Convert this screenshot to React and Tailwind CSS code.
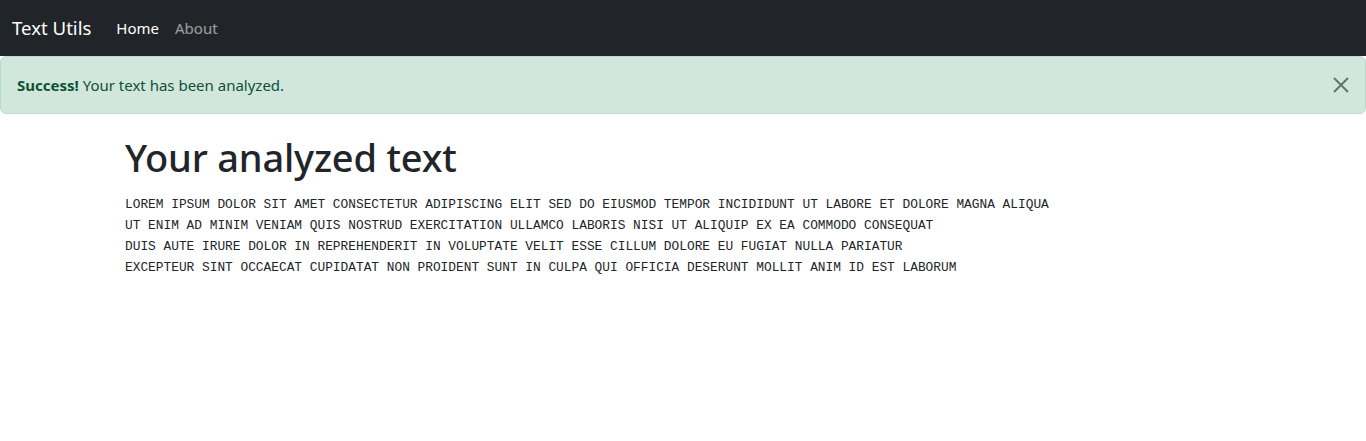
import React from "react";

const lines = [
  "LOREM IPSUM DOLOR SIT AMET CONSECTETUR ADIPISCING ELIT SED DO EIUSMOD TEMPOR INCIDIDUNT UT LABORE ET DOLORE MAGNA ALIQUA",
  "UT ENIM AD MINIM VENIAM QUIS NOSTRUD EXERCITATION ULLAMCO LABORIS NISI UT ALIQUIP EX EA COMMODO CONSEQUAT",
  "DUIS AUTE IRURE DOLOR IN REPREHENDERIT IN VOLUPTATE VELIT ESSE CILLUM DOLORE EU FUGIAT NULLA PARIATUR",
  "EXCEPTEUR SINT OCCAECAT CUPIDATAT NON PROIDENT SUNT IN CULPA QUI OFFICIA DESERUNT MOLLIT ANIM ID EST LABORUM",
];

export default function App() {
  return (
    <div className="min-h-[441px] bg-white font-['Noto_Sans',sans-serif] text-[#212529]">
      {/* navbar */}
      <nav className="flex h-14 items-center bg-[#212529] px-3">
        <span className="mr-[25px] text-[18.6px] text-white">Text Utils</span>
        <a className="text-[15px] text-white">Home</a>
        <a className="ml-4 text-[15px] text-white/55">About</a>
      </nav>

      {/* alert */}
      <div className="relative flex h-[58px] items-center rounded-md border border-[#badbcc] bg-[#d1e7dd] px-4 text-[15px] text-[#0f5132]">
        <span className="pt-px">
          <strong className="font-bold">Success!</strong> Your text has been analyzed.
        </span>
        <button className="absolute right-4 top-1/2 -translate-y-1/2 opacity-50">
          <svg width="16" height="16" viewBox="0 0 16 16">
            <path d="M1 1 L15 15 M15 1 L1 15" stroke="#000" strokeWidth="2" />
          </svg>
        </button>
      </div>

      {/* content */}
      <div className="mx-auto w-[1140px] px-3 pt-[19px]">
        <h1 className="text-[38px] font-medium leading-[48px] tracking-[-0.2px]">Your analyzed text</h1>
        <div className="mt-[13px] font-['Liberation_Mono',monospace] text-[12.83px] leading-[21px]">
          {lines.map((l) => (
            <div key={l}>{l}</div>
          ))}
        </div>
      </div>
    </div>
  );
}
